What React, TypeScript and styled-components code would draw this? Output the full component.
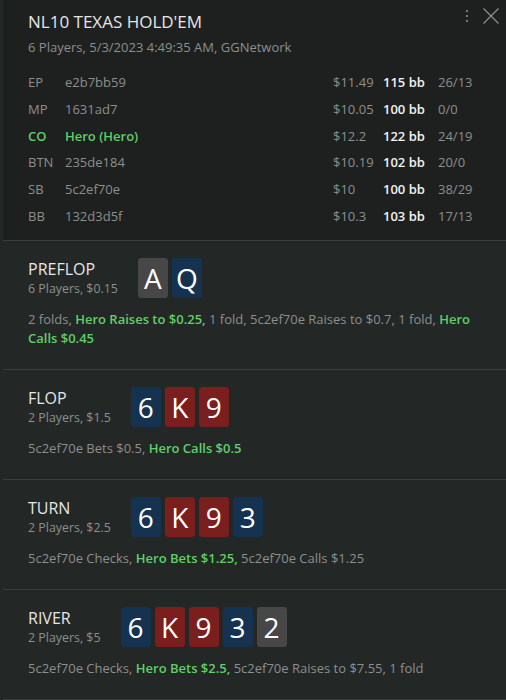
import styled, { createGlobalStyle } from 'styled-components';

type Suit = 'grey' | 'blue' | 'red';
type Card = { rank: string; suit: Suit };
type Action = { text: string; hero?: boolean };

const players = [
  { pos: 'EP', name: 'e2b7bb59', money: '$11.49', bb: '115 bb', stats: '26/13' },
  { pos: 'MP', name: '1631ad7', money: '$10.05', bb: '100 bb', stats: '0/0' },
  { pos: 'CO', name: 'Hero (Hero)', money: '$12.2', bb: '122 bb', stats: '24/19', hero: true },
  { pos: 'BTN', name: '235de184', money: '$10.19', bb: '102 bb', stats: '20/0' },
  { pos: 'SB', name: '5c2ef70e', money: '$10', bb: '100 bb', stats: '38/29' },
  { pos: 'BB', name: '132d3d5f', money: '$10.3', bb: '103 bb', stats: '17/13' },
];

const streets: { title: string; info: string; cards: Card[]; actions: Action[] }[] = [
  {
    title: 'PREFLOP',
    info: '6 Players, $0.15',
    cards: [
      { rank: 'A', suit: 'grey' },
      { rank: 'Q', suit: 'blue' },
    ],
    actions: [
      { text: '2 folds, ' },
      { text: 'Hero Raises to $0.25, ', hero: true },
      { text: '1 fold, 5c2ef70e Raises to $0.7, 1 fold, ' },
      { text: 'Hero Calls $0.45', hero: true },
    ],
  },
  {
    title: 'FLOP',
    info: '2 Players, $1.5',
    cards: [
      { rank: '6', suit: 'blue' },
      { rank: 'K', suit: 'red' },
      { rank: '9', suit: 'red' },
    ],
    actions: [{ text: '5c2ef70e Bets $0.5, ' }, { text: 'Hero Calls $0.5', hero: true }],
  },
  {
    title: 'TURN',
    info: '2 Players, $2.5',
    cards: [
      { rank: '6', suit: 'blue' },
      { rank: 'K', suit: 'red' },
      { rank: '9', suit: 'red' },
      { rank: '3', suit: 'blue' },
    ],
    actions: [
      { text: '5c2ef70e Checks, ' },
      { text: 'Hero Bets $1.25, ', hero: true },
      { text: '5c2ef70e Calls $1.25' },
    ],
  },
  {
    title: 'RIVER',
    info: '2 Players, $5',
    cards: [
      { rank: '6', suit: 'blue' },
      { rank: 'K', suit: 'red' },
      { rank: '9', suit: 'red' },
      { rank: '3', suit: 'blue' },
      { rank: '2', suit: 'grey' },
    ],
    actions: [
      { text: '5c2ef70e Checks, ' },
      { text: 'Hero Bets $2.5, ', hero: true },
      { text: '5c2ef70e Raises to $7.55, 1 fold' },
    ],
  },
];

const suitColors: Record<Suit, string> = {
  grey: '#474747',
  blue: '#153350',
  red: '#7a1e1e',
};

const App = () => {
  return (
    <>
      <GlobalStyle />
      <Panel>
        <Header>
          <TitleRow>
            <Title>NL10 TEXAS HOLD'EM</Title>
            <Icons>
              <svg width="6" height="16" viewBox="0 0 6 16">
                <circle cx="3" cy="3" r="1.1" fill="#8a8d8c" />
                <circle cx="3" cy="8" r="1.1" fill="#8a8d8c" />
                <circle cx="3" cy="13" r="1.1" fill="#8a8d8c" />
              </svg>
              <svg width="18" height="18" viewBox="0 0 18 18">
                <path d="M1.5 1.5 L16.5 16.5 M16.5 1.5 L1.5 16.5" stroke="#8a8d8c" strokeWidth="1.3" />
              </svg>
            </Icons>
          </TitleRow>
          <SubTitle>6 Players, 5/3/2023 4:49:35 AM, GGNetwork</SubTitle>
          <PlayerTable>
            {players.map((p) => (
              <PlayerRow key={p.pos} $hero={p.hero}>
                <Pos>{p.pos}</Pos>
                <Name>{p.name}</Name>
                <Money>{p.money}</Money>
                <Stack>{p.bb}</Stack>
                <Stats>{p.stats}</Stats>
              </PlayerRow>
            ))}
          </PlayerTable>
        </Header>

        {streets.map((s) => (
          <Street key={s.title}>
            <StreetHead>
              <StreetLabel>
                <StreetTitle>{s.title}</StreetTitle>
                <StreetInfo>{s.info}</StreetInfo>
              </StreetLabel>
              <Cards>
                {s.cards.map((c, i) => (
                  <CardBox key={i} $suit={c.suit}>
                    {c.rank}
                  </CardBox>
                ))}
              </Cards>
            </StreetHead>
            <Actions>
              {s.actions.map((a, i) =>
                a.hero ? <HeroAction key={i}>{a.text}</HeroAction> : <span key={i}>{a.text}</span>
              )}
            </Actions>
          </Street>
        ))}
      </Panel>
    </>
  );
};

const GlobalStyle = createGlobalStyle`
  body {
    margin: 0;
    background: #232726;
    font-family: "Segoe UI", "Open Sans", "Noto Sans", sans-serif;
  }
`;

const Panel = styled.div`
  margin-left: 3px;
  width: 503px;
  height: 700px;
  overflow: hidden;
  background: #232726;
`;

const Header = styled.div`
  background: #1d201f;
  padding: 6px 6px 11px 25px;
  border-bottom: 1px solid #393d3c;
`;

const TitleRow = styled.div`
  display: flex;
  align-items: flex-start;
  justify-content: space-between;
`;

const Title = styled.div`
  font-size: 17px;
  color: #e6e6e6;
  padding-top: 4px;
`;

const Icons = styled.div`
  display: flex;
  align-items: center;
  gap: 12px;
  padding-top: 1px;
`;

const SubTitle = styled.div`
  font-size: 13px;
  color: #8c8f8e;
  margin-top: 5px;
`;

const PlayerTable = styled.div`
  margin-top: 13px;
  padding-right: 22px;
`;

const PlayerRow = styled.div<{ $hero?: boolean }>`
  display: grid;
  grid-template-columns: 37px 1fr 50px 55px 40px;
  height: 26.7px;
  align-items: center;
  font-size: 13px;
  color: ${(p) => (p.$hero ? '#5fcf66' : '#8c8f8e')};
  font-weight: ${(p) => (p.$hero ? 600 : 400)};
`;

const Pos = styled.span``;
const Name = styled.span``;

const Money = styled.span`
  color: #8c8f8e;
  font-weight: 400;
`;

const Stack = styled.span`
  color: #f2f2f2;
  font-weight: 600;
`;

const Stats = styled.span`
  color: #8c8f8e;
  font-weight: 400;
`;

const Street = styled.div`
  padding: 17px 28px 21px 25px;
  border-bottom: 1px solid #393d3c;
`;

const StreetHead = styled.div`
  display: flex;
  align-items: flex-end;
  gap: 20px;
`;

const StreetLabel = styled.div`
  display: flex;
  flex-direction: column;
`;

const StreetTitle = styled.div`
  font-size: 16px;
  color: #e6e6e6;
  line-height: 22px;
`;

const StreetInfo = styled.div`
  font-size: 12.4px;
  color: #8c8f8e;
  line-height: 18px;
`;

const Cards = styled.div`
  display: flex;
  gap: 4px;
`;

const CardBox = styled.div<{ $suit: Suit }>`
  width: 30px;
  height: 40px;
  border-radius: 3px;
  background: ${(p) => suitColors[p.$suit]};
  color: #ffffff;
  font-size: 28px;
  display: flex;
  align-items: center;
  justify-content: center;
`;

const Actions = styled.div`
  margin-top: 12px;
  font-size: 13px;
  line-height: 19px;
  color: #8c8f8e;
`;

const HeroAction = styled.span`
  color: #5fcf66;
  font-weight: 600;
`;

export default App;
